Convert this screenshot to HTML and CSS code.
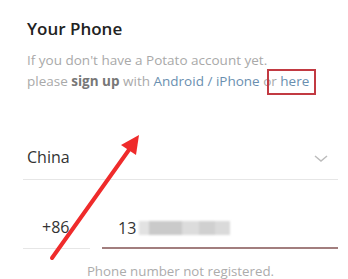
FILE: index.html
```html
<!DOCTYPE html>
<html lang="en">
<head>
    <meta charset="UTF-8">
    <meta name="viewport" content="width=device-width, initial-scale=1.0">
    <title>Your Phone</title>
    <link rel="stylesheet" href="styles.css">
</head>
<body>
    <div class="login">
        <h2 class="title">Your Phone</h2>
        <p class="desc">If you don't have a Potato account yet.<br>please <b>sign up</b> with <a href="#">Android / iPhone</a> <span class="mark">or <a href="#">here</a></span></p>

        <div class="country">
            <span>China</span>
            <svg class="chevron" width="14" height="8" viewBox="0 0 14 8"><polyline points="1,1 7,6 13,1" fill="none" stroke="#bcbcbc" stroke-width="1.5"/></svg>
        </div>

        <div class="phone">
            <div class="code">+86</div>
            <div class="number">13<span class="blurred"></span></div>
        </div>

        <p class="error">Phone number not registered.</p>

        <svg class="arrow" width="348" height="279" viewBox="0 0 348 279">
            <line x1="52" y1="258" x2="131" y2="147" stroke="#ef2b2b" stroke-width="4" stroke-linecap="round"/>
            <polygon points="139,135 136,155 121,145" fill="#ef2b2b"/>
        </svg>
    </div>
</body>
</html>
```

FILE: styles.css
```css
body { margin: 0; background: #fff; font-family: "Open Sans", "Liberation Sans", sans-serif; }
.login { position: relative; width: 348px; height: 279px; padding: 0 10px 0 23px; box-sizing: border-box; overflow: hidden; }
.title { margin: 0; padding: 19px 0 0 4px; font-size: 17px; line-height: 20px; font-weight: 600; color: #222; }
.desc { margin: 11px 0 0; padding-left: 4px; font-size: 13.5px; line-height: 21px; color: #a9a9a9; white-space: nowrap; }
.desc b { color: #777; font-weight: 700; }
.desc a { color: #6a8fb0; text-decoration: none; }
.mark { position: relative; }
.mark::after { content: ""; position: absolute; left: 4px; right: -7px; top: -3px; bottom: -5px; border: 2px solid #c23a42; }
.country { display: flex; justify-content: space-between; align-items: center; margin-top: 55px; padding: 0 10px 12px 4px; border-bottom: 1px solid #e6e6e6; font-size: 16px; line-height: 20px; color: #333; }
.chevron { margin-top: 3px; }
.phone { display: flex; gap: 12px; margin-top: 37px; font-size: 16px; line-height: 20px; color: #333; }
.code { width: 67px; padding: 0 0 11px 19px; box-sizing: border-box; border-bottom: 1px solid #e6e6e6; }
.number { flex: 1; display: flex; align-items: center; padding: 0 0 9px 16px; border-bottom: 2px solid #a27e7e; }
.blurred { width: 91px; height: 14px; margin-left: 3px; filter: blur(1px); background: linear-gradient(90deg, #e2e2e2 0 10px, #cacaca 10px 43px, #dcdcdc 43px 60px, #d0d0d0 60px 76px, #dadada 76px 91px); }
.error { margin: 13px 0 0; text-align: center; font-size: 13.3px; line-height: 18px; color: #acacac; }
.arrow { position: absolute; left: 0; top: 0; pointer-events: none; }
```
